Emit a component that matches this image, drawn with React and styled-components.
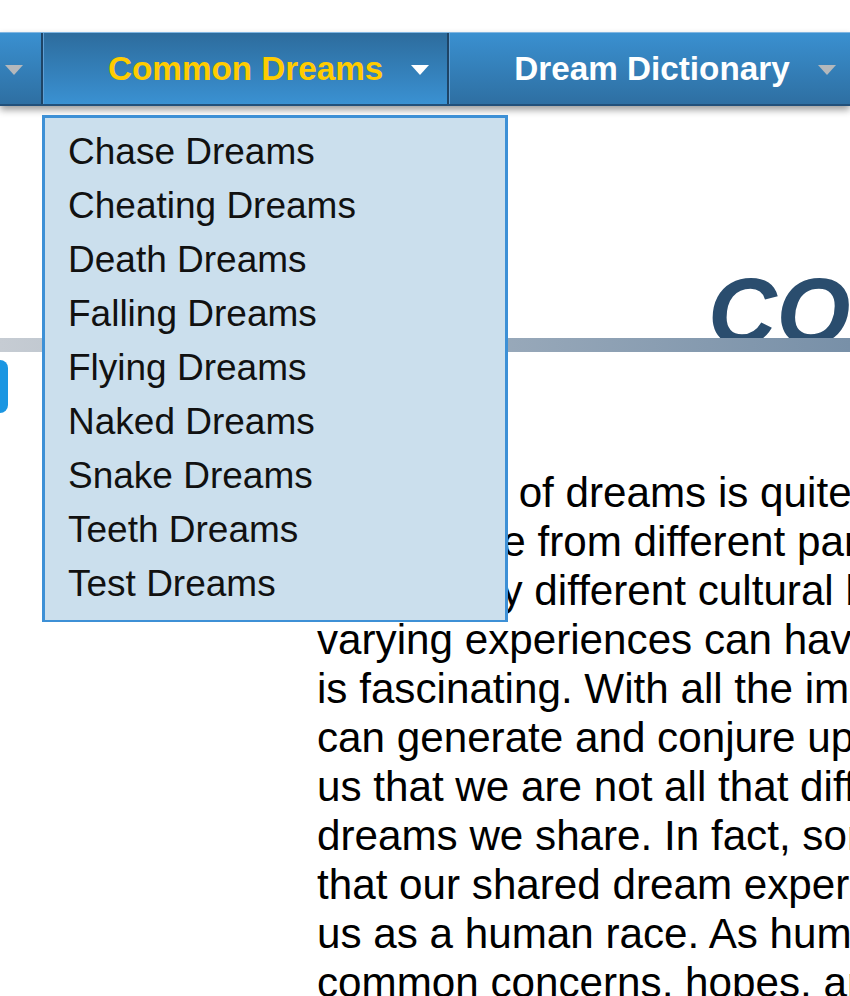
import React from 'react';
import styled, { createGlobalStyle } from 'styled-components';

const GlobalStyle = createGlobalStyle`
  html, body {
    margin: 0;
    padding: 0;
    background: #fff;
    overflow: hidden;
  }
  body {
    font-family: "Liberation Sans", Arial, sans-serif;
  }
`;

const Page = styled.div`
  position: relative;
  width: 850px;
  height: 996px;
  overflow: hidden;
  padding-top: 32px;
  box-sizing: border-box;
`;

const NavBar = styled.nav`
  position: relative;
  z-index: 2;
  display: flex;
  height: 74px;
  box-sizing: border-box;
  border-top: 1px solid #80b6e2;
  border-bottom: 2px solid #22507a;
  background: linear-gradient(#3a90d0, #2e6fa2);
  box-shadow: 0 4px 7px rgba(0, 0, 0, 0.38);
  white-space: nowrap;
`;

const NavItem = styled.div`
  position: relative;
  flex: none;
  display: flex;
  align-items: center;
  justify-content: flex-end;
  gap: 28px;
  padding: 0 18px 0 ${p => (p.$first ? 0 : 65)}px;
  width: ${p => (p.$width ? `${p.$width}px` : 'auto')};
  box-sizing: border-box;
  border-right: 2px solid #1e4466;
  box-shadow: inset ${p => (p.$first ? 0 : 1)}px 0 0 #5f9fd4;
  background: ${p =>
    p.$active
      ? 'linear-gradient(#2d6c9d, #3a91d2)'
      : 'linear-gradient(#3a90d0, #2e6fa2)'};
  font-size: 33.25px;
  font-weight: bold;
  color: ${p => (p.$active ? '#ffcc00' : '#ffffff')};
`;

const Caret = styled.span`
  width: 0;
  height: 0;
  border-left: 9.5px solid transparent;
  border-right: 9.5px solid transparent;
  border-top: 10px solid ${p => (p.$active ? '#ffffff' : '#b4b8bc')};
  margin-top: 2px;
`;

const Dropdown = styled.ul`
  position: absolute;
  z-index: 3;
  top: 115px;
  left: 42px;
  width: 466px;
  height: 507px;
  box-sizing: border-box;
  margin: 0;
  padding: 7px 0 0 23px;
  list-style: none;
  background: #cbdfed;
  border: 3px solid #3d90d6;
  border-bottom-width: 2px;
`;

const DropItem = styled.li`
  font-size: 37px;
  line-height: 54px;
  color: #111;
  white-space: nowrap;
`;

const HeadingWrap = styled.header`
  height: 232px;
  overflow: hidden;
  padding: 158px 0 0 708px;
  box-sizing: border-box;
`;

const Title = styled.h1`
  margin: 0;
  font-size: 95px;
  line-height: 1;
  font-weight: bold;
  font-style: italic;
  color: #2a4d6e;
  white-space: nowrap;
`;

const Rule = styled.div`
  height: 14px;
  background: linear-gradient(to right, #c6ccd3, #7890a8);
`;

const Body = styled.div`
  display: flex;
`;

const Sidebar = styled.aside`
  flex: none;
  width: 317px;
`;

const SideButton = styled.div`
  width: 60px;
  height: 53px;
  margin: 8px 0 0 -52px;
  border-radius: 8px;
  background: #1b96e2;
`;

const Article = styled.article`
  padding-top: 116px;
`;

const Text = styled.p`
  margin: 0;
  font-size: 42.2px;
  line-height: 49px;
  color: #000;
  white-space: nowrap;
`;

const dreams = [
  'Chase Dreams',
  'Cheating Dreams',
  'Death Dreams',
  'Falling Dreams',
  'Flying Dreams',
  'Naked Dreams',
  'Snake Dreams',
  'Teeth Dreams',
  'Test Dreams',
];

const lines = [
  'The realm of dreams is quite remarkable. That',
  'and people from different parts of the world,',
  'affected by different cultural backgrounds and',
  'varying experiences can have similar dreams',
  'is fascinating. With all the images our minds',
  'can generate and conjure up, it reminds',
  'us that we are not all that different given the',
  'dreams we share. In fact, some would argue',
  'that our shared dream experiences connect',
  'us as a human race. As humans we share',
  'common concerns, hopes, and fears.',
];

export default function App() {
  return (
    <Page>
      <GlobalStyle />
      <NavBar>
        <NavItem $first $width={43}>
          <Caret />
        </NavItem>
        <NavItem $active>
          Common Dreams
          <Caret $active />
        </NavItem>
        <NavItem>
          Dream Dictionary
          <Caret />
        </NavItem>
      </NavBar>

      <Dropdown>
        {dreams.map(d => (
          <DropItem key={d}>{d}</DropItem>
        ))}
      </Dropdown>

      <HeadingWrap>
        <Title>COMMON DREAMS</Title>
      </HeadingWrap>
      <Rule />

      <Body>
        <Sidebar>
          <SideButton />
        </Sidebar>
        <Article>
          <Text>
            {lines.map((l, i) => (
              <React.Fragment key={i}>
                {l}
                {i < lines.length - 1 && <br />}
              </React.Fragment>
            ))}
          </Text>
        </Article>
      </Body>
    </Page>
  );
}
